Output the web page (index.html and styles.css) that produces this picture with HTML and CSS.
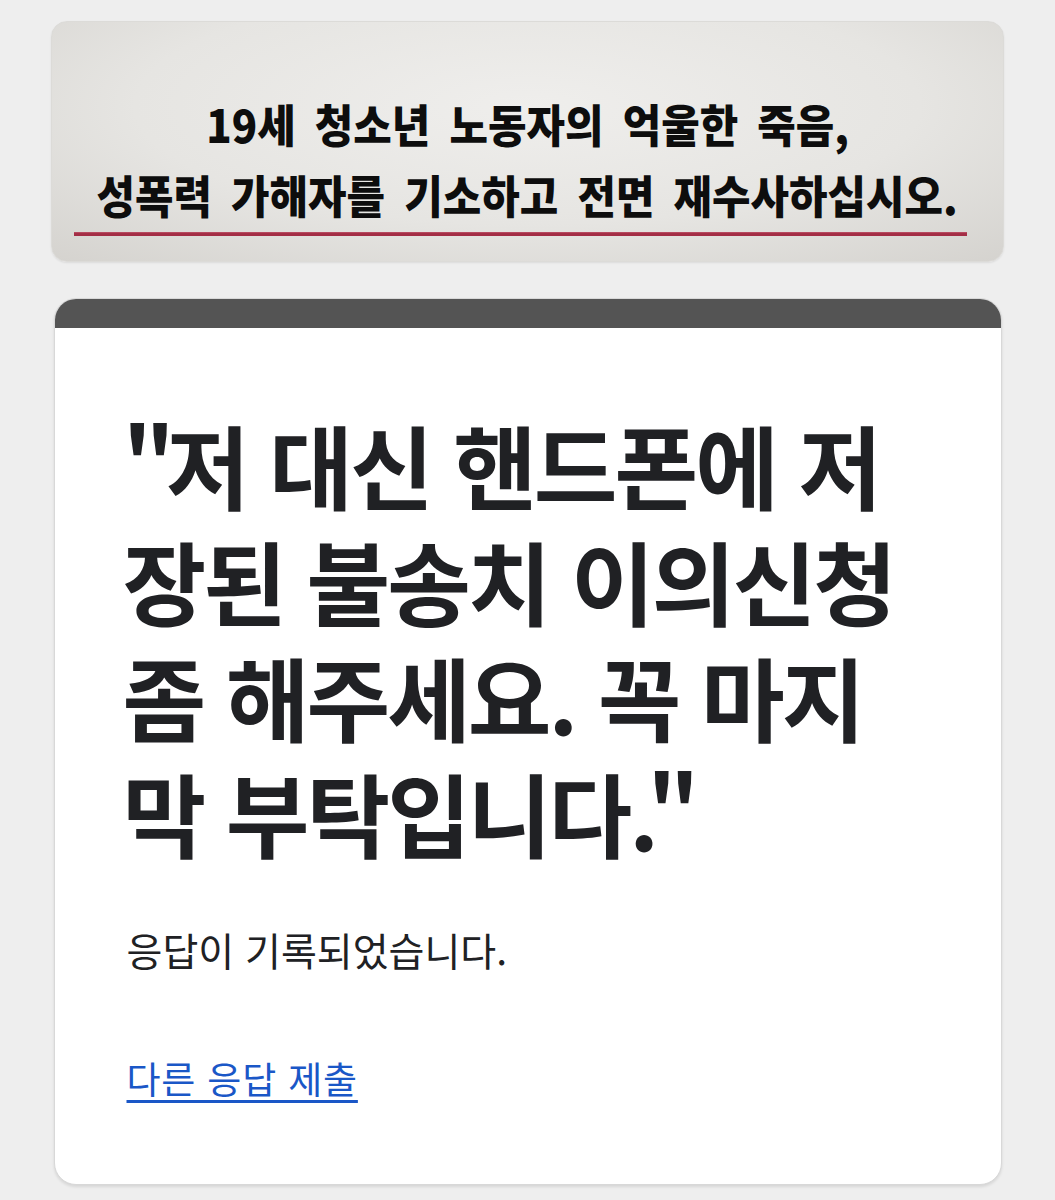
FILE: index.html
```html
<!DOCTYPE html>
<html lang="ko">
<head>
<meta charset="utf-8">
<title>응답이 기록되었습니다</title>
<link rel="stylesheet" href="styles.css">
</head>
<body>
<div class="page">
  <header class="banner">
    <p class="banner-line"><span class="squeeze">19세 청소년 노동자의 억울한 죽음,</span></p>
    <p class="banner-line"><span class="squeeze">성폭력 가해자를 기소하고 전면 재수사하십시오.</span></p>
    <div class="banner-rule"></div>
  </header>

  <main class="card">
    <div class="card-bar"></div>
    <div class="card-body">
      <h1 class="title"><span class="open">"</span>저 대신 핸드폰에 저<br>장된 불송치 이의신청<br>좀 해주세요. 꼭 마지<br>막 부탁입니다<span class="close">."</span></h1>
      <p class="note">응답이 기록되었습니다.</p>
      <a class="again" href="#">다른 응답 제출</a>
    </div>
  </main>
</div>
</body>
</html>
```

FILE: styles.css
```css
html, body {
  margin: 0;
  padding: 0;
  background: #eeeeee;
}

body {
  font-family: "Noto Sans CJK KR", "Noto Sans", sans-serif;
  color: #202124;
}

.page {
  padding-top: 21px;
  padding-bottom: 17px;
}

.banner {
  width: 953px;
  margin: 0 auto;
  box-sizing: border-box;
  height: 241px;
  padding-top: 66px;
  border: 1px solid #dcdbd8;
  border-radius: 16px;
  background: radial-gradient(ellipse 75% 90% at 50% 35%, #efeeec 0%, #e6e5e2 55%, #d4d2ce 100%);
  box-shadow: 0 1px 2px rgba(0, 0, 0, 0.08);
}

.banner-line {
  margin: 0;
  text-align: center;
  font-size: 45px;
  font-weight: 900;
  line-height: 71px;
  color: #0d0d0d;
  white-space: nowrap;
}

.squeeze {
  display: inline-block;
  transform: scaleX(0.93);
  word-spacing: 8px;
}

.banner-rule {
  width: 893px;
  height: 4px;
  margin: 2px 0 0 22px;
  background: linear-gradient(#c0566b, #a32d45 40%, #a32d45);
}

.card {
  display: block;
  width: 948px;
  margin: 36px auto 0;
  box-sizing: border-box;
  background: #ffffff;
  border: 1px solid #d8d8d8;
  border-radius: 22px;
  overflow: hidden;
  box-shadow: 0 2px 3px rgba(0, 0, 0, 0.1);
}

.card-bar {
  height: 29px;
  background: #545454;
}

.card-body {
  padding: 77px 30px 80px 72px;
}

.title {
  margin: 0 0 0 -4px;
  font-size: 91px;
  font-weight: 700;
  line-height: 116px;
  letter-spacing: -3px;
  color: #202124;
  white-space: nowrap;
}

.open {
  letter-spacing: -9px;
}

.close {
  letter-spacing: -12px;
}

.note {
  margin: 52px 0 0;
  font-size: 39px;
  font-weight: 400;
  line-height: 56px;
  color: #202124;
}

.again {
  display: inline-block;
  margin-top: 75px;
  font-size: 37px;
  line-height: 52px;
  letter-spacing: 0.8px;
  color: #1a57c7;
  text-decoration: underline;
  text-decoration-thickness: 3px;
  text-underline-offset: 6px;
}
```
